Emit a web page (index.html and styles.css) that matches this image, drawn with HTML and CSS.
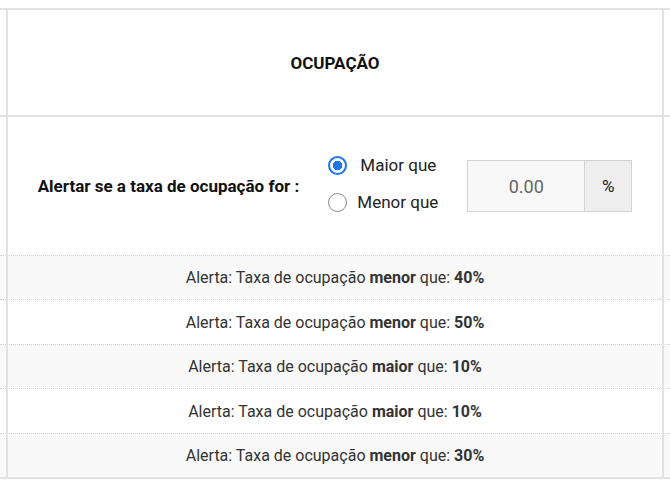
FILE: index.html
```html
<!DOCTYPE html>
<html lang="pt-BR">
<head>
    <meta charset="UTF-8">
    <title>Ocupação</title>
    <link rel="stylesheet" href="styles.css">
</head>
<body>
    <div class="sheet">
        <div class="row head">
            <div class="edge"></div>
            <div class="cell">OCUPAÇÃO</div>
            <div class="edge"></div>
        </div>

        <div class="row form-row">
            <div class="edge"></div>
            <div class="cell">
                <label class="main-label">Alertar se a taxa de ocupação for :</label>
                <div class="radios">
                    <label class="radio radio-first">
                        <input type="radio" name="tipo" value="maior" checked>
                        <span>Maior que</span>
                    </label>
                    <label class="radio">
                        <input type="radio" name="tipo" value="menor">
                        <span>Menor que</span>
                    </label>
                </div>
                <div class="input-group">
                    <input type="text" class="rate" value="0.00">
                    <span class="addon">%</span>
                </div>
            </div>
            <div class="edge"></div>
        </div>

        <div class="row alert striped">
            <div class="edge"></div>
            <div class="cell">Alerta: Taxa de ocupação <b>menor</b> que: <b>40%</b></div>
            <div class="edge"></div>
        </div>
        <div class="row alert tall">
            <div class="edge"></div>
            <div class="cell">Alerta: Taxa de ocupação <b>menor</b> que: <b>50%</b></div>
            <div class="edge"></div>
        </div>
        <div class="row alert striped">
            <div class="edge"></div>
            <div class="cell">Alerta: Taxa de ocupação <b>maior</b> que: <b>10%</b></div>
            <div class="edge"></div>
        </div>
        <div class="row alert tall">
            <div class="edge"></div>
            <div class="cell">Alerta: Taxa de ocupação <b>maior</b> que: <b>10%</b></div>
            <div class="edge"></div>
        </div>
        <div class="row alert striped">
            <div class="edge"></div>
            <div class="cell">Alerta: Taxa de ocupação <b>menor</b> que: <b>30%</b></div>
            <div class="edge"></div>
        </div>
    </div>
</body>
</html>
```

FILE: styles.css
```css
:root {
    --line-color: #e2e2e2;
    --dot-color: #d4d4d4;
    --stripe-color: #f9f9f9;
    --radio-blue: #1a76f2;
}

body {
    margin: 0;
    font-family: Roboto, 'Liberation Sans', Arial, sans-serif;
    color: #333;
    background: white;
}

.sheet {
    margin-top: 8px;
    border-top: 2px solid var(--line-color);
    border-bottom: 2px solid var(--line-color);
}

.row {
    display: grid;
    grid-template-columns: 6px 1fr 6px;
}

.cell {
    border-left: 2px solid var(--line-color);
    border-right: 2px solid var(--line-color);
    display: flex;
    align-items: center;
    justify-content: center;
}

.head .cell {
    height: 105px;
    font-size: 17px;
    font-weight: 700;
    color: #111;
}

.head {
    border-bottom: 2px solid var(--line-color);
}

.form-row .cell {
    height: 138px;
    gap: 29px;
}

.main-label {
    font-size: 17px;
    font-weight: 700;
    color: #111;
}

.radios {
    display: flex;
    flex-direction: column;
    gap: 17px;
    margin-top: -4px;
}

.radio {
    display: flex;
    align-items: center;
    gap: 10px;
    font-size: 17px;
    color: #222;
    cursor: pointer;
}

.radio-first span {
    margin-left: 3px;
    margin-top: -2px;
}

.radio input {
    appearance: none;
    margin: 0;
    width: 19px;
    height: 19px;
    border: 1.5px solid #8a8a8a;
    border-radius: 50%;
    background: white;
}

.radio input:checked {
    border: 2px solid var(--radio-blue);
    background: radial-gradient(circle, var(--radio-blue) 0 4.5px, white 5px);
}

.input-group {
    display: flex;
    height: 50px;
    border: 1px solid #d2d2d2;
}

.rate {
    width: 116px;
    border: none;
    border-right: 1px solid #d2d2d2;
    background: #f8f8f8;
    font-family: inherit;
    font-size: 18px;
    color: #666;
    text-align: center;
    padding: 0;
    outline: none;
}

.addon {
    width: 46px;
    background: #eeeeee;
    display: flex;
    align-items: center;
    justify-content: center;
    font-size: 17px;
    color: #222;
}

.alert {
    border-top: 1px dotted var(--dot-color);
}

.alert .cell {
    height: 43px;
    font-size: 16px;
    white-space: pre;
}

.alert.tall .cell {
    height: 44px;
}

.alert b {
    font-weight: 700;
}

.striped {
    background: var(--stripe-color);
}
```
